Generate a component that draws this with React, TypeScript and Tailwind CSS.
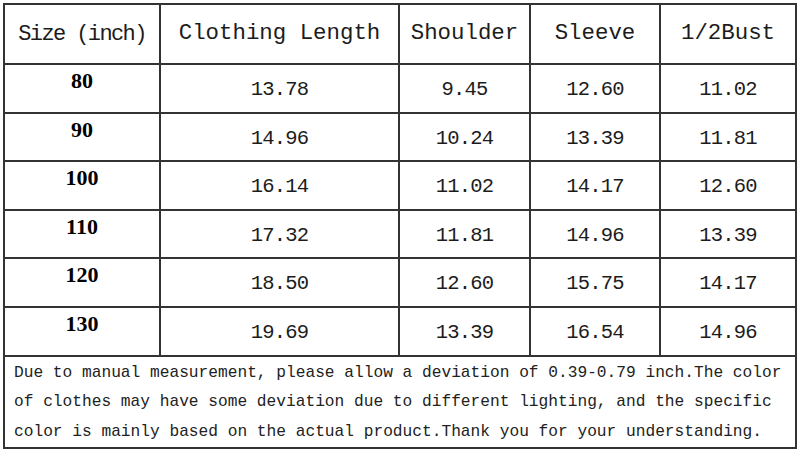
import React from 'react';

const rows = [
  ['80', '13.78', '9.45', '12.60', '11.02'],
  ['90', '14.96', '10.24', '13.39', '11.81'],
  ['100', '16.14', '11.02', '14.17', '12.60'],
  ['110', '17.32', '11.81', '14.96', '13.39'],
  ['120', '18.50', '12.60', '15.75', '14.17'],
  ['130', '19.69', '13.39', '16.54', '14.96'],
];

const mono = { fontFamily: '"Liberation Mono", "DejaVu Sans Mono", monospace' };
const serif = { fontFamily: '"Liberation Serif", "Times New Roman", serif' };

export default function App() {
  return (
    <div className="w-[800px] h-[450px] bg-white p-[3px]" style={mono}>
      <table className="w-[792px] table-fixed border-collapse border-2 border-[#333] text-[#1c1c1c]">
        <colgroup>
          <col className="w-[156px]" />
          <col className="w-[239px]" />
          <col className="w-[131px]" />
          <col className="w-[130px]" />
          <col className="w-[136px]" />
        </colgroup>
        <thead>
          <tr className="h-[60px]">
            <th className="border-2 border-[#333] font-normal text-[22px] tracking-[-1.6px] text-center whitespace-nowrap">Size (inch)</th>
            <th className="border-2 border-[#333] font-normal text-[22.4px] text-center whitespace-nowrap">Clothing Length</th>
            <th className="border-2 border-[#333] font-normal text-[22.4px] text-center whitespace-nowrap">Shoulder</th>
            <th className="border-2 border-[#333] font-normal text-[22.4px] text-center whitespace-nowrap">Sleeve</th>
            <th className="border-2 border-[#333] font-normal text-[22.4px] text-center whitespace-nowrap">1/2Bust</th>
          </tr>
        </thead>
        <tbody>
          {rows.map((r) => (
            <tr key={r[0]} className="h-[48.6px]">
              <td className="border-2 border-[#333] align-top pt-[3px] text-center text-[22px] font-bold leading-[1.2] text-black" style={serif}>
                {r[0]}
              </td>
              {r.slice(1).map((v, i) => (
                <td key={i} className="border-2 border-[#333] text-center text-[20.5px] tracking-[-0.8px] pt-[4px]">
                  {v}
                </td>
              ))}
            </tr>
          ))}
          <tr className="h-[90px]">
            <td colSpan={5} className="border-2 border-[#333] align-top pl-[9px] pt-[2px] text-[16.2px] leading-[29.5px] whitespace-nowrap text-[#222]">
              <div>Due to manual measurement, please allow a deviation of 0.39-0.79 inch.The color</div>
              <div>of clothes may have some deviation due to different lighting, and the specific</div>
              <div>color is mainly based on the actual product.Thank you for your understanding.</div>
            </td>
          </tr>
        </tbody>
      </table>
    </div>
  );
}
